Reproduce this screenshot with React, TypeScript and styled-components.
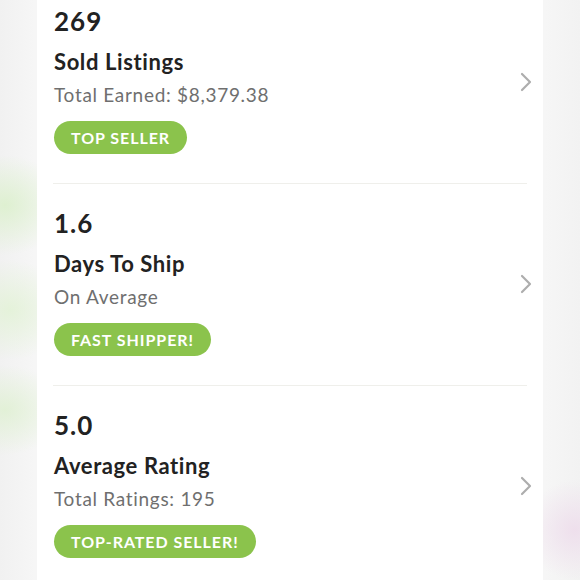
import React from "react";
import styled, { createGlobalStyle } from "styled-components";

interface IStat {
  value: string;
  title: string;
  detail: string;
  badge: string;
}

const stats: IStat[] = [
  {
    value: "269",
    title: "Sold Listings",
    detail: "Total Earned: $8,379.38",
    badge: "Top Seller",
  },
  {
    value: "1.6",
    title: "Days To Ship",
    detail: "On Average",
    badge: "Fast Shipper!",
  },
  {
    value: "5.0",
    title: "Average Rating",
    detail: "Total Ratings: 195",
    badge: "Top-Rated Seller!",
  },
];

const Chevron = () => (
  <svg width="14" height="20" viewBox="0 0 14 20" fill="none">
    <path
      d="M3 2l8 8-8 8"
      stroke="#adadad"
      strokeWidth="2.2"
      strokeLinecap="round"
      strokeLinejoin="round"
    />
  </svg>
);

const App: React.FC = () => {
  return (
    <Page>
      <GlobalStyle />
      <Card>
        {stats.map((s) => (
          <StatRow key={s.title}>
            <StatBody>
              <Value>{s.value}</Value>
              <Title>{s.title}</Title>
              <Detail>{s.detail}</Detail>
              <Badge>{s.badge}</Badge>
            </StatBody>
            <Chevron />
          </StatRow>
        ))}
      </Card>
    </Page>
  );
};
export default App;

const GlobalStyle = createGlobalStyle`
  html, body {
    margin: 0;
    padding: 0;
    height: 580px;
    overflow: hidden;
  }
  body {
    font-family: Lato, "Open Sans", sans-serif;
    background:
      radial-gradient(60px 50px at 5px 205px, rgba(220, 240, 205, 0.9), transparent),
      radial-gradient(60px 50px at 10px 310px, rgba(225, 242, 212, 0.8), transparent),
      radial-gradient(60px 45px at 5px 410px, rgba(222, 240, 208, 0.8), transparent),
      radial-gradient(50px 50px at 575px 530px, rgba(238, 222, 236, 0.95), transparent),
      linear-gradient(90deg, #f1f1f1 0%, #f6f6f6 6%, #f6f6f6 94%, #f2f2f2 100%);
  }
`;

const Page = styled.div`
  display: flex;
  justify-content: center;
  padding: 0 37px;
  height: 580px;
  overflow: hidden;
`;

const Card = styled.div`
  width: 506px;
  flex: none;
  min-height: 640px;
  background: #ffffff;
  margin-top: -19px;
  align-self: flex-start;
`;

const StatRow = styled.div`
  display: flex;
  align-items: center;
  justify-content: space-between;
  margin: 0 16px;
  padding: 24px 0 29px 1px;
  border-top: 1px solid #efefeb;

  svg {
    margin-right: -6px;
    margin-top: 3px;
  }
`;

const StatBody = styled.div`
  display: flex;
  flex-direction: column;
  align-items: flex-start;
`;

const Value = styled.div`
  font-size: 26px;
  line-height: 30px;
  font-weight: 700;
  letter-spacing: 1px;
  color: #222222;
`;

const Title = styled.div`
  margin-top: 13px;
  font-size: 22px;
  line-height: 26px;
  font-weight: 700;
  letter-spacing: 0.6px;
  color: #222222;
`;

const Detail = styled.div`
  margin-top: 8px;
  font-size: 19px;
  line-height: 24px;
  letter-spacing: 0.7px;
  color: #6f6f6f;
`;

const Badge = styled.div`
  margin-top: 14px;
  height: 33px;
  padding: 0 17px;
  display: flex;
  align-items: center;
  border-radius: 17px;
  background: #8bc34c;
  color: #ffffff;
  font-size: 16px;
  font-weight: 700;
  letter-spacing: 0.95px;
  text-transform: uppercase;
`;
